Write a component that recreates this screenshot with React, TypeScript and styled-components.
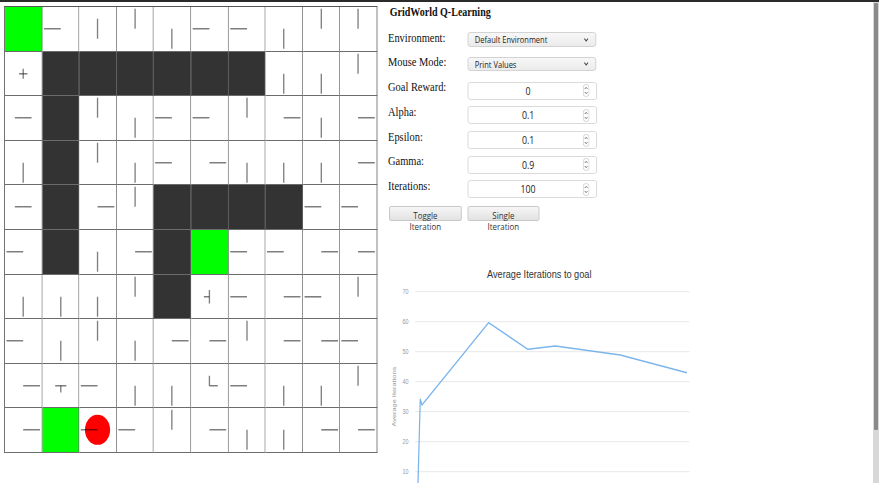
import React from 'react';
import styled, { createGlobalStyle } from 'styled-components';

const K = 0.835;

const GlobalStyle = createGlobalStyle`
  html, body { margin: 0; padding: 0; background: #fff; overflow: hidden; width: 879px; height: 483px; }
  #root { width: 879px; height: 483px; overflow: hidden; }
`;

const Stage = styled.div`
  width: ${879 / K}px;
  height: 483px;
  box-sizing: border-box;
  transform: scaleX(${K});
  transform-origin: 0 0;
  border-top: 2px solid #2b2b2b;
  padding: 4px 0 0 5px;
  display: flex;
  align-items: flex-start;
  font-family: "Liberation Serif", "Times New Roman", serif;
  color: #111;
  overflow: hidden;
`;

const Board = styled.div`
  flex-shrink: 0;
  width: 447px;
  height: 447px;
  box-sizing: border-box;
  display: grid;
  grid-template-columns: repeat(10, 1fr);
  grid-template-rows: repeat(10, 1fr);
  border-top: 1px solid #555;
  border-left: 1px solid #555;
`;

type Kind = 'open' | 'wall' | 'goal';

const Cell = styled.div<{ $kind: Kind }>`
  border-right: 1px solid #6c6c6c;
  border-bottom: 1px solid #6c6c6c;
  background: ${(p) => (p.$kind === 'wall' ? '#333333' : p.$kind === 'goal' ? '#00ff00' : '#ffffff')};
  overflow: hidden;
`;

const PolicySvg = styled.svg`
  display: block;
  width: 100%;
  height: 100%;
`;

const Panel = styled.div`
  margin-left: 12.7px;
  margin-top: -0.6px;
  width: 400px;
  display: flex;
  flex-direction: column;
`;

const Title = styled.h1`
  margin: 0;
  font-size: 12px;
  line-height: 14px;
  font-weight: bold;
  padding-left: 2px;
`;

const Form = styled.div`
  margin-top: 10.6px;
  display: grid;
  grid-template-columns: 94.9px 156px;
  grid-auto-rows: 24.7px;
  align-items: start;
`;

const Label = styled.label`
  font-size: 12.5px;
  line-height: 14px;
  padding-top: 0.8px;
  white-space: nowrap;
`;

const SelectBox = styled.div`
  margin-top: 2.3px;
  width: 154px;
  height: 14.5px;
  box-sizing: border-box;
  border: 1px solid #cfcfcf;
  border-radius: 3px;
  background: linear-gradient(#f7f7f7, #ebebeb);
  display: flex;
  align-items: flex-end;
  justify-content: space-between;
  padding: 0 8px 0 8px;
  font-family: "Open Sans", "DejaVu Sans", sans-serif;
  font-size: 9px;
  line-height: 11.5px;
  color: #222;
`;

const Chevron = styled.svg`
  align-self: center;
  flex-shrink: 0;
`;

const NumberBox = styled.div`
  margin-top: 2.3px;
  width: 155.7px;
  height: 18px;
  box-sizing: border-box;
  border: 1px solid #d6d6d6;
  border-radius: 3px;
  background: #fff;
  display: flex;
  align-items: center;
  padding: 0 8px 0 6px;
  font-family: "Open Sans", "DejaVu Sans", sans-serif;
  font-size: 10.5px;
  color: #222;
`;

const NumberValue = styled.span`
  flex: 1;
  text-align: center;
`;

const ButtonCell = styled.div<{ $offset: number }>`
  margin-top: 3.3px;
  margin-left: ${(p) => p.$offset}px;
`;

const Button = styled.button`
  display: block;
  width: 86.5px;
  height: 15px;
  box-sizing: border-box;
  padding: 2.5px 0 0 0;
  border: 1px solid #c3c3c3;
  border-radius: 2px;
  background: linear-gradient(#f6f6f6, #e2e2e2);
  font-family: "Open Sans", "DejaVu Sans", sans-serif;
  font-size: 9.5px;
  line-height: 11px;
  color: #333;
  white-space: pre-line;
  text-align: center;
  overflow: visible;
  vertical-align: top;
`;

const ChartSvg = styled.svg`
  display: block;
  margin-top: 27.4px;
  flex-shrink: 0;
  font-family: "Liberation Sans", Arial, sans-serif;
`;

const ScrollTrack = styled.div`
  position: fixed;
  top: 2px;
  right: 0;
  bottom: 0;
  width: 6px;
  background: #d8d8d8;
`;

const ScrollThumb = styled.div`
  position: fixed;
  top: 3px;
  right: 1.3px;
  width: 3.6px;
  height: 427px;
  background: #8a8a8a;
  border-radius: 1px;
`;

const rows = [
  'G L UD U D L L D U U',
  'UDLR W W W W W W D D U',
  'LR W U D L L U R D R',
  'D W U D L R D D D R',
  'LR W R U W W W W L L',
  'L W D R W G L L R R',
  'D D D U W UDL L R L U',
  'L D U D R R U R R L',
  'R LRD L D D UR L D D U',
  'R G AL L U R D D R R',
];

const grid = rows.map((r) => r.split(' '));

const SINGLE = 46;

function Policy({ dirs, agent }: { dirs: string; agent: boolean }) {
  const n = dirs.length;
  const len = n > 0 ? SINGLE / n : 0;
  const vec: Record<string, [number, number]> = { U: [0, -1], D: [0, 1], L: [-1, 0], R: [1, 0] };
  return (
    <PolicySvg viewBox="0 0 100 100" preserveAspectRatio="none">
      {agent && <ellipse cx="50" cy="50" rx="34.5" ry="34.5" fill="#ff0000" />}
      {dirs.split('').map((d) => (
        <line
          key={d}
          x1="50"
          y1="50"
          x2={50 + vec[d][0] * len}
          y2={50 + vec[d][1] * len}
          stroke="rgba(0,0,0,0.5)"
          strokeWidth="1.6"
          vectorEffect="non-scaling-stroke"
        />
      ))}
    </PolicySvg>
  );
}

function SelectField({ value }: { value: string }) {
  return (
    <SelectBox>
      <span>{value}</span>
      <Chevron width="6" height="4" viewBox="0 0 6 4">
        <path d="M0.8 0.7 L3 3 L5.2 0.7" fill="none" stroke="#444" strokeWidth="1.1" />
      </Chevron>
    </SelectBox>
  );
}

function NumberField({ value }: { value: string }) {
  return (
    <NumberBox>
      <NumberValue>{value}</NumberValue>
      <svg width="8" height="13" viewBox="0 0 8 13">
        <rect x="0.5" y="0.5" width="7" height="12" rx="3.2" fill="#fff" stroke="#c4c4c4" strokeWidth="0.8" />
        <path d="M2.3 5 L4 3.3 L5.7 5" fill="none" stroke="#666" strokeWidth="0.9" />
        <path d="M2.3 8 L4 9.7 L5.7 8" fill="none" stroke="#666" strokeWidth="0.9" />
      </svg>
    </NumberBox>
  );
}

const points: [number, number][] = [
  [35, 246.7],
  [38.3, 144.3],
  [40.3, 150],
  [120.1, 67.7],
  [167.3, 94.3],
  [200, 91],
  [277.8, 100],
  [357.7, 117.7],
];

function Chart() {
  const ticks = [70, 60, 50, 40, 30, 20, 10];
  return (
    <ChartSvg width="380" height="240" viewBox="0 0 380 240">
      <text x="180.8" y="23.3" textAnchor="middle" fontSize="11" fill="#333">
        Average Iterations to goal
      </text>
      {ticks.map((t) => {
        const y = 246.7 - 3 * t;
        return (
          <g key={t}>
            <line x1="32.3" x2="360.8" y1={y} y2={y} stroke="#e6e6e6" strokeWidth="1" />
            <text x="24.3" y={y + 2.3} textAnchor="end" fontSize="6.5" fill="#999">
              {t}
            </text>
          </g>
        );
      })}
      <text
        x="0"
        y="0"
        transform="translate(9.2 141.7) rotate(-90)"
        textAnchor="middle"
        fontSize="7.4"
        fill="#999"
      >
        Average Iterations
      </text>
      <polyline
        points={points.map((p) => p.join(',')).join(' ')}
        fill="none"
        stroke="#7cb5ec"
        strokeWidth="1.5"
        strokeLinejoin="round"
      />
    </ChartSvg>
  );
}

export default function App() {
  return (
    <>
      <GlobalStyle />
      <Stage>
        <Board>
          {grid.map((row, r) =>
            row.map((tok, c) => {
              const kind: Kind = tok === 'W' ? 'wall' : tok === 'G' ? 'goal' : 'open';
              const agent = tok.startsWith('A');
              const dirs = kind === 'open' ? tok.replace('A', '') : '';
              return (
                <Cell key={`${r}-${c}`} $kind={kind}>
                  {kind === 'open' && <Policy dirs={dirs} agent={agent} />}
                </Cell>
              );
            })
          )}
        </Board>
        <Panel>
          <Title>GridWorld Q-Learning</Title>
          <Form>
            <Label>Environment:</Label>
            <SelectField value="Default Environment" />
            <Label>Mouse Mode:</Label>
            <SelectField value="Print Values" />
            <Label>Goal Reward:</Label>
            <NumberField value="0" />
            <Label>Alpha:</Label>
            <NumberField value="0.1" />
            <Label>Epsilon:</Label>
            <NumberField value="0.1" />
            <Label>Gamma:</Label>
            <NumberField value="0.9" />
            <Label>Iterations:</Label>
            <NumberField value="100" />
            <ButtonCell $offset={1.5}>
              <Button type="button">{'Toggle\nIteration'}</Button>
            </ButtonCell>
            <ButtonCell $offset={0}>
              <Button type="button">{'Single\nIteration'}</Button>
            </ButtonCell>
          </Form>
          <Chart />
        </Panel>
      </Stage>
      <ScrollTrack />
      <ScrollThumb />
    </>
  );
}
